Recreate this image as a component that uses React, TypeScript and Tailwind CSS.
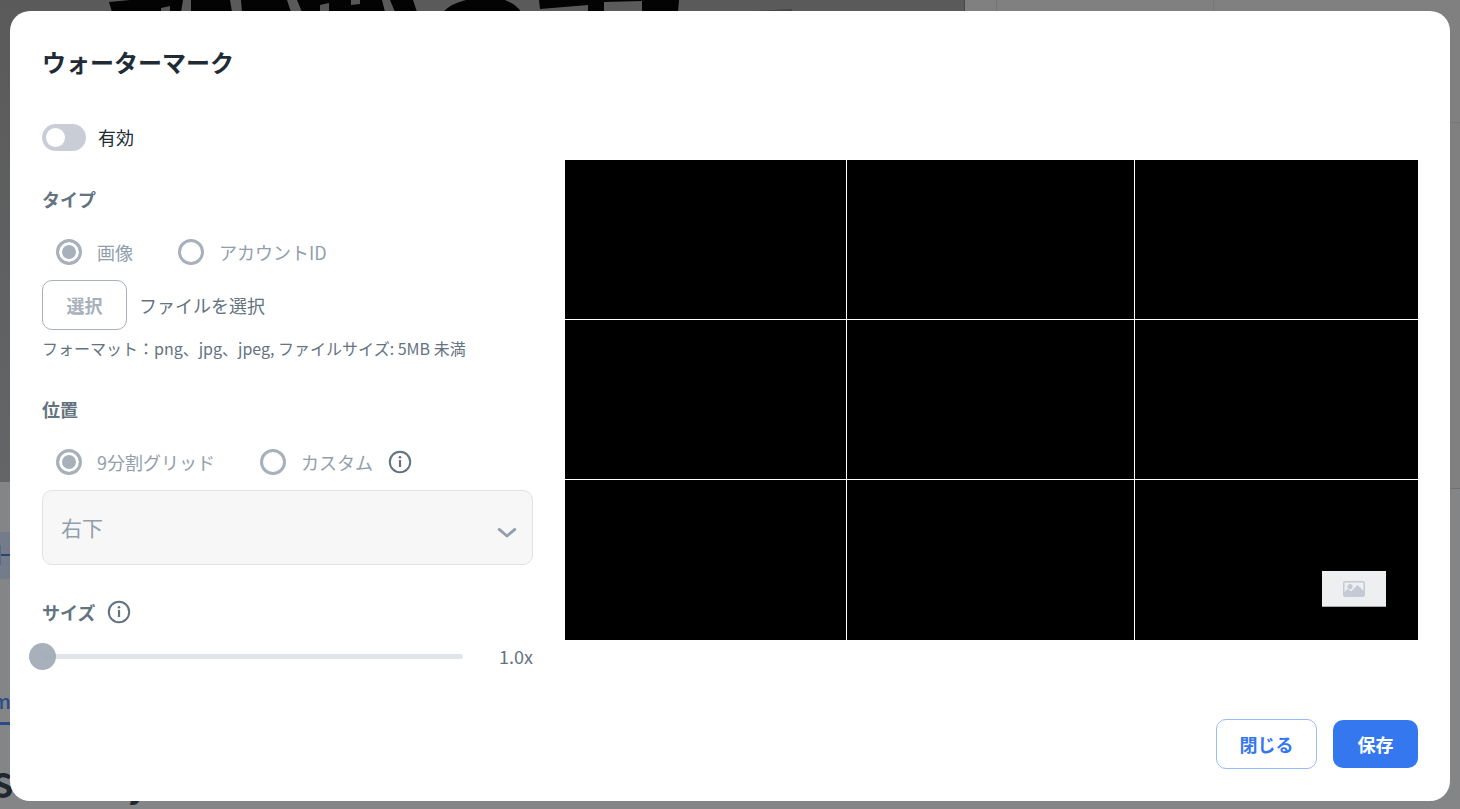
import type { ReactNode } from "react";

function InfoIcon() {
  return (
    <svg viewBox="0 0 24 24" className="size-6 text-[#637381]" fill="none" stroke="currentColor" strokeWidth="2">
      <circle cx="12" cy="12" r="10.2" />
      <path d="M12 10v7" strokeWidth="2.2" />
      <circle cx="12" cy="7.2" r="1.3" fill="currentColor" stroke="none" />
    </svg>
  );
}

function ImageIcon() {
  return (
    <svg viewBox="0 0 22 16" className="w-[22px] h-4" fill="none">
      <rect x="0.75" y="0.75" width="20.5" height="14.5" rx="1.5" stroke="#c3cad3" strokeWidth="1.5" />
      <circle cx="7" cy="5.6" r="2.6" fill="#c3cad3" />
      <path d="M1 11.5 4.7 8 8 10.6 14.6 4 21 10.2V15H1z" fill="#c3cad3" />
    </svg>
  );
}

function SectionTitle({ children }: { children: ReactNode }) {
  return <h3 className="flex items-center gap-3 h-7 text-[18px] leading-7 font-bold text-[#637381]">{children}</h3>;
}

function Radio({ name, label, checked }: { name: string; label: string; checked?: boolean }) {
  return (
    <label className="flex items-center gap-[15px] text-[18px] leading-7 text-[#919eab]">
      <input
        type="radio"
        name={name}
        defaultChecked={checked}
        disabled
        className="appearance-none size-[26px] rounded-full border-3 border-[#a8b1bb] checked:bg-[#a8b1bb] checked:shadow-[inset_0_0_0_3px_white]"
      />
      {label}
    </label>
  );
}

function Background() {
  return (
    <div aria-hidden="true" className="absolute inset-0 flex overflow-hidden bg-[#848587]">
      <div className="flex flex-col flex-[965]">
        <div className="h-[482px] shrink-0 border-r border-[#484848] bg-linear-to-b from-[#5a5a5a] to-[#636567]">
          <svg viewBox="0 0 964 12" className="w-full h-3" fill="#030303">
            <path d="M109 2 130 0H183L181 12H112z" />
            <path d="M191 0h39l2 12h-41zM241 0h46l4 12h-49zM297 0h85l3 12h-83zM390 0h23l4 12h-22z" />
            <path d="M443 12Q452 3 466 0h39q12 5 16 12zM539 0h140l-1 12h-64l-1-11v11h-25V5l-48 4z" />
            <path d="M161 8l9-2v6h-9zM320 5l9-2v9h-9zM351 0h9v4l-9 1z" fill="#565656" />
            <path d="M604 2l38-1v11h-38z" fill="#5b5b5b" />
            <path d="M738 12l54-3v3z" fill="#444" />
          </svg>
        </div>
        <div className="mt-[50px] h-12 w-6 bg-[#747c8b] flex items-center">
          <div className="h-5 w-px bg-[#5d6a86]" />
          <div className="h-[2px] w-full bg-[#294477]" />
        </div>
        <div className="mt-[106px] h-[41px] w-6 border-b-3 border-[#2b4b89] text-[20px] leading-8 font-medium text-[#2b4b89]">
          <span className="-ml-2">m</span>
        </div>
        <div className="mt-[34px] flex gap-[115px] text-[34px] leading-[50px] font-bold text-[#20272f]">
          <span className="-ml-2">S</span>
          <span>y</span>
        </div>
      </div>
      <div className="flex-[495]">
        <div className="h-[123px] flex border-b border-[#777] bg-[#808080]">
          <div className="w-8 border-r border-[#747474]" />
          <div className="w-[217px] border-r border-[#777]" />
        </div>
        <div className="h-[366px] border-b border-[#707070] bg-[#808080]" />
      </div>
    </div>
  );
}

export default function App() {
  return (
    <div className="relative min-h-screen px-[10px] pt-[11px] pb-2 flex font-['Noto_Sans_CJK_JP','Noto_Sans',sans-serif]">
      <Background />

      <div role="dialog" aria-labelledby="dialog-title" className="relative flex-1 flex flex-col rounded-[20px] bg-white p-8">
        <h2 id="dialog-title" className="text-[24px] leading-[38px] font-bold text-[#212b36]">
          ウォーターマーク
        </h2>

        <div className="mt-[42px] grid grid-cols-[491fr_853fr] gap-8">
          <div>
            <label className="flex items-center gap-3 h-7 text-[18px] leading-7 text-[#212b36]">
              <input
                type="checkbox"
                role="switch"
                className="appearance-none w-11 h-[27px] rounded-full bg-[#c9cdd5] p-1 before:block before:size-[19px] before:rounded-full before:bg-white checked:bg-[#3577ee] checked:before:ml-[17px]"
              />
              有効
            </label>

            <section className="mt-[34px]">
              <SectionTitle>タイプ</SectionTitle>
              <div className="mt-[25px] ml-[14px] flex items-center gap-[45px]">
                <Radio name="type" label="画像" checked />
                <Radio name="type" label="アカウントID" />
              </div>
              <div className="mt-[14px] flex items-center gap-3">
                <button
                  type="button"
                  disabled
                  className="h-[50px] w-[85px] rounded-[10px] border border-[#a8b1bb] text-[18px] font-bold text-[#a8b1bb]"
                >
                  選択
                </button>
                <span className="text-[18px] leading-7 text-[#637381]">ファイルを選択</span>
              </div>
              <p className="mt-[6px] text-[16px] leading-6 text-[#637381]">
                フォーマット：png、jpg、jpeg, ファイルサイズ: 5MB 未満
              </p>
            </section>

            <section className="mt-[35px]">
              <SectionTitle>位置</SectionTitle>
              <div className="mt-[25px] ml-[14px] flex items-center gap-[45px]">
                <Radio name="position" label="9分割グリッド" checked />
                <div className="flex items-center gap-[15px]">
                  <Radio name="position" label="カスタム" />
                  <InfoIcon />
                </div>
              </div>
              <div className="relative mt-[14px]">
                <select
                  disabled
                  aria-label="位置"
                  className="block appearance-none w-full h-[75px] rounded-[10px] border border-[#dfe2e6] bg-[#f7f7f7] px-[18px] text-[21px] text-[#919eab] opacity-100"
                >
                  <option>右下</option>
                </select>
                <svg
                  viewBox="0 0 20 12"
                  className="absolute right-4 top-9 w-5 h-3 text-[#919eab]"
                  fill="none"
                  stroke="currentColor"
                  strokeWidth="2.8"
                  strokeLinecap="round"
                  strokeLinejoin="round"
                >
                  <path d="M2.2 3.4 10 10l7.8-6.6" />
                </svg>
              </div>
            </section>

            <section className="mt-[33px]">
              <SectionTitle>
                サイズ
                <InfoIcon />
              </SectionTitle>
              <div className="mt-4 flex items-center justify-between">
                <div className="relative w-[421px] h-7 flex items-center">
                  <div className="h-[5px] w-full rounded-full bg-[#e1e5e9]" />
                  <input
                    type="range"
                    aria-label="サイズ"
                    min={1}
                    max={5}
                    step={0.1}
                    defaultValue={1}
                    disabled
                    className="absolute -left-[13px] w-[447px] h-7 appearance-none bg-transparent [&::-webkit-slider-thumb]:appearance-none [&::-webkit-slider-thumb]:size-[27px] [&::-webkit-slider-thumb]:rounded-full [&::-webkit-slider-thumb]:bg-[#9fa9b4]/90"
                  />
                </div>
                <span className="text-[18px] leading-7 text-[#637381]">1.0x</span>
              </div>
            </section>
          </div>

          <div className="relative mt-[37px] self-start grid grid-cols-[281fr_288fr_284fr] grid-rows-3 aspect-[853/480] bg-black">
            <div />
            <div className="border-l border-white" />
            <div className="border-l border-white" />
            <div className="border-t border-white -mt-px" />
            <div className="border-t border-l border-white -mt-px" />
            <div className="border-t border-l border-white -mt-px" />
            <div className="border-t border-white -mt-px" />
            <div className="border-t border-l border-white -mt-px" />
            <div className="border-t border-l border-white -mt-px" />
            <div className="absolute right-8 bottom-[33px] w-16 h-9 bg-[#edeff1] border-b border-[#a8abaf] flex items-center justify-center">
              <ImageIcon />
            </div>
          </div>
        </div>

        <div className="mt-auto flex items-center justify-end gap-4">
          <button
            type="button"
            className="h-[50px] w-[101px] rounded-[10px] border border-[#9abbf6] text-[18px] font-bold text-[#3577ee]"
          >
            閉じる
          </button>
          <button type="button" className="h-12 w-[85px] rounded-[10px] bg-[#3577ee] text-[18px] font-bold text-white">
            保存
          </button>
        </div>
      </div>
    </div>
  );
}
